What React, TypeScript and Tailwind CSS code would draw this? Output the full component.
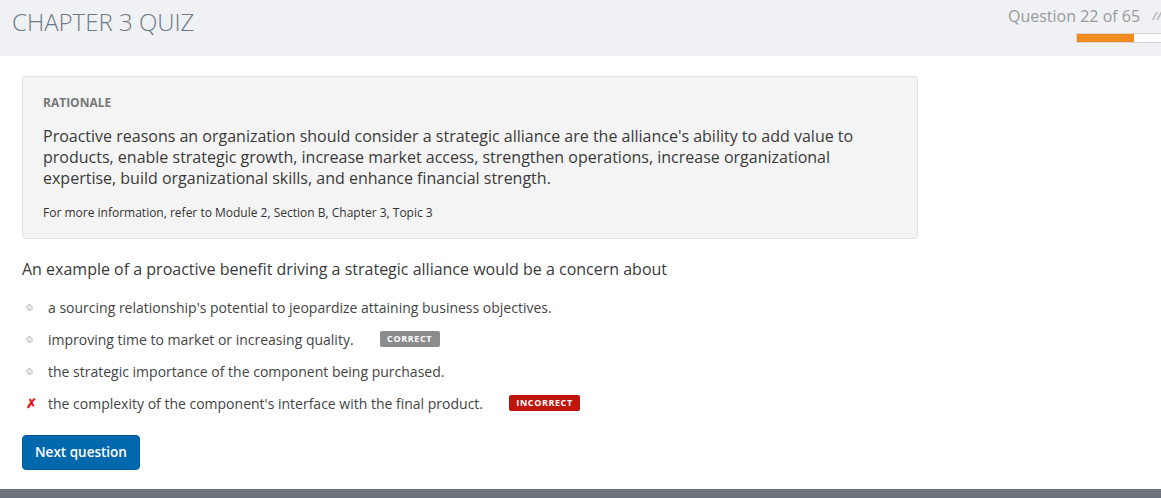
import React from 'react';

type Option = { text: string; mark: 'none' | 'wrong'; badge?: 'correct' | 'incorrect' };

const options: Option[] = [
  { text: "a sourcing relationship's potential to jeopardize attaining business objectives.", mark: 'none' },
  { text: 'improving time to market or increasing quality.', mark: 'none', badge: 'correct' },
  { text: 'the strategic importance of the component being purchased.', mark: 'none' },
  { text: "the complexity of the component's interface with the final product.", mark: 'wrong', badge: 'incorrect' },
];

const Bullet = ({ mark }: { mark: Option['mark'] }) => {
  if (mark === 'wrong') {
    return <span className="w-[26px] shrink-0 pl-[4px] text-[13px] font-bold leading-none text-[#e8141b]">✗</span>;
  }
  return (
    <span className="flex w-[26px] shrink-0 pl-[4px]">
      <svg width="7" height="7" viewBox="0 0 7 7">
        <path d="M3.5 0.5 L6.5 3.5 L3.5 6.5 L0.5 3.5 Z" fill="none" stroke="#c4c4c4" strokeWidth="1.4" />
        <rect x="3" y="3" width="1" height="1" fill="#c4c4c4" />
      </svg>
    </span>
  );
};

export default function App() {
  return (
    <div className="min-h-[498px] w-full overflow-hidden bg-white font-['Open_Sans',sans-serif] flex flex-col">
      <header className="flex h-[56px] w-full overflow-hidden bg-[#eff1f4]">
        <h1 className="flex-1 pl-[12px] pt-[6px] text-[24px] font-light leading-[32px] text-[#6d7886]">
          CHAPTER 3 QUIZ
        </h1>
        <div className="w-[153px] shrink-0 pt-[5px]">
          <div className="flex items-center gap-[12px] whitespace-nowrap text-[16px] leading-[22px] text-[#9a9a9a]">
            <span>Question 22 of 65</span>
            <span className="text-[11px] italic font-bold text-[#b8b8b8]">//</span>
          </div>
          <div className="ml-[68px] mt-[6px] flex h-[10px] w-[100px] border border-[#d6d6d6] bg-white">
            <div className="h-full w-[57px] bg-[#f28a1e]" />
          </div>
        </div>
      </header>

      <main className="flex-1 px-[22px] pt-[20px]">
        <section className="w-[896px] rounded-[3px] border border-[#e2e2e2] bg-[#f4f4f4] px-[20px] pt-[18px] pb-[17px]">
          <div className="text-[12px] font-bold leading-[16px] text-[#777777]">RATIONALE</div>
          <p className="mt-[15px] text-[16px] leading-[21px] text-[#3a3a3a]">
            Proactive reasons an organization should consider a strategic alliance are the alliance's ability to add value to
            products, enable strategic growth, increase market access, strengthen operations, increase organizational
            expertise, build organizational skills, and enhance financial strength.
          </p>
          <p className="mt-[16px] text-[12px] leading-[16px] text-[#333333]">
            For more information, refer to Module 2, Section B, Chapter 3, Topic 3
          </p>
        </section>

        <p className="mt-[19px] text-[16px] leading-[22px] text-[#3a3a3a]">
          An example of a proactive benefit driving a strategic alliance would be a concern about
        </p>

        <ul className="mt-[17px] flex flex-col gap-[12px]">
          {options.map((o) => (
            <li key={o.text} className="flex h-[20px] items-center text-[14px] text-[#444444]">
              <Bullet mark={o.mark} />
              <span>{o.text}</span>
              {o.badge === 'correct' && (
                <span className="ml-[26px] flex h-[16px] w-[60px] items-center justify-center rounded-[2px] bg-[#8c8c8c] text-[9px] font-bold tracking-[0.6px] text-white">
                  CORRECT
                </span>
              )}
              {o.badge === 'incorrect' && (
                <span className="ml-[26px] flex h-[16px] w-[71px] items-center justify-center rounded-[2px] bg-[#c0140c] text-[9px] font-bold tracking-[0.6px] text-white">
                  INCORRECT
                </span>
              )}
            </li>
          ))}
        </ul>

        <button className="mt-[22px] h-[35px] w-[118px] rounded-[4px] border border-[#055a94] bg-[#0068ad] text-[13.5px] font-semibold text-white">
          Next question
        </button>
      </main>

      <footer className="h-[9px] w-full bg-[#6b747c]" />
    </div>
  );
}
